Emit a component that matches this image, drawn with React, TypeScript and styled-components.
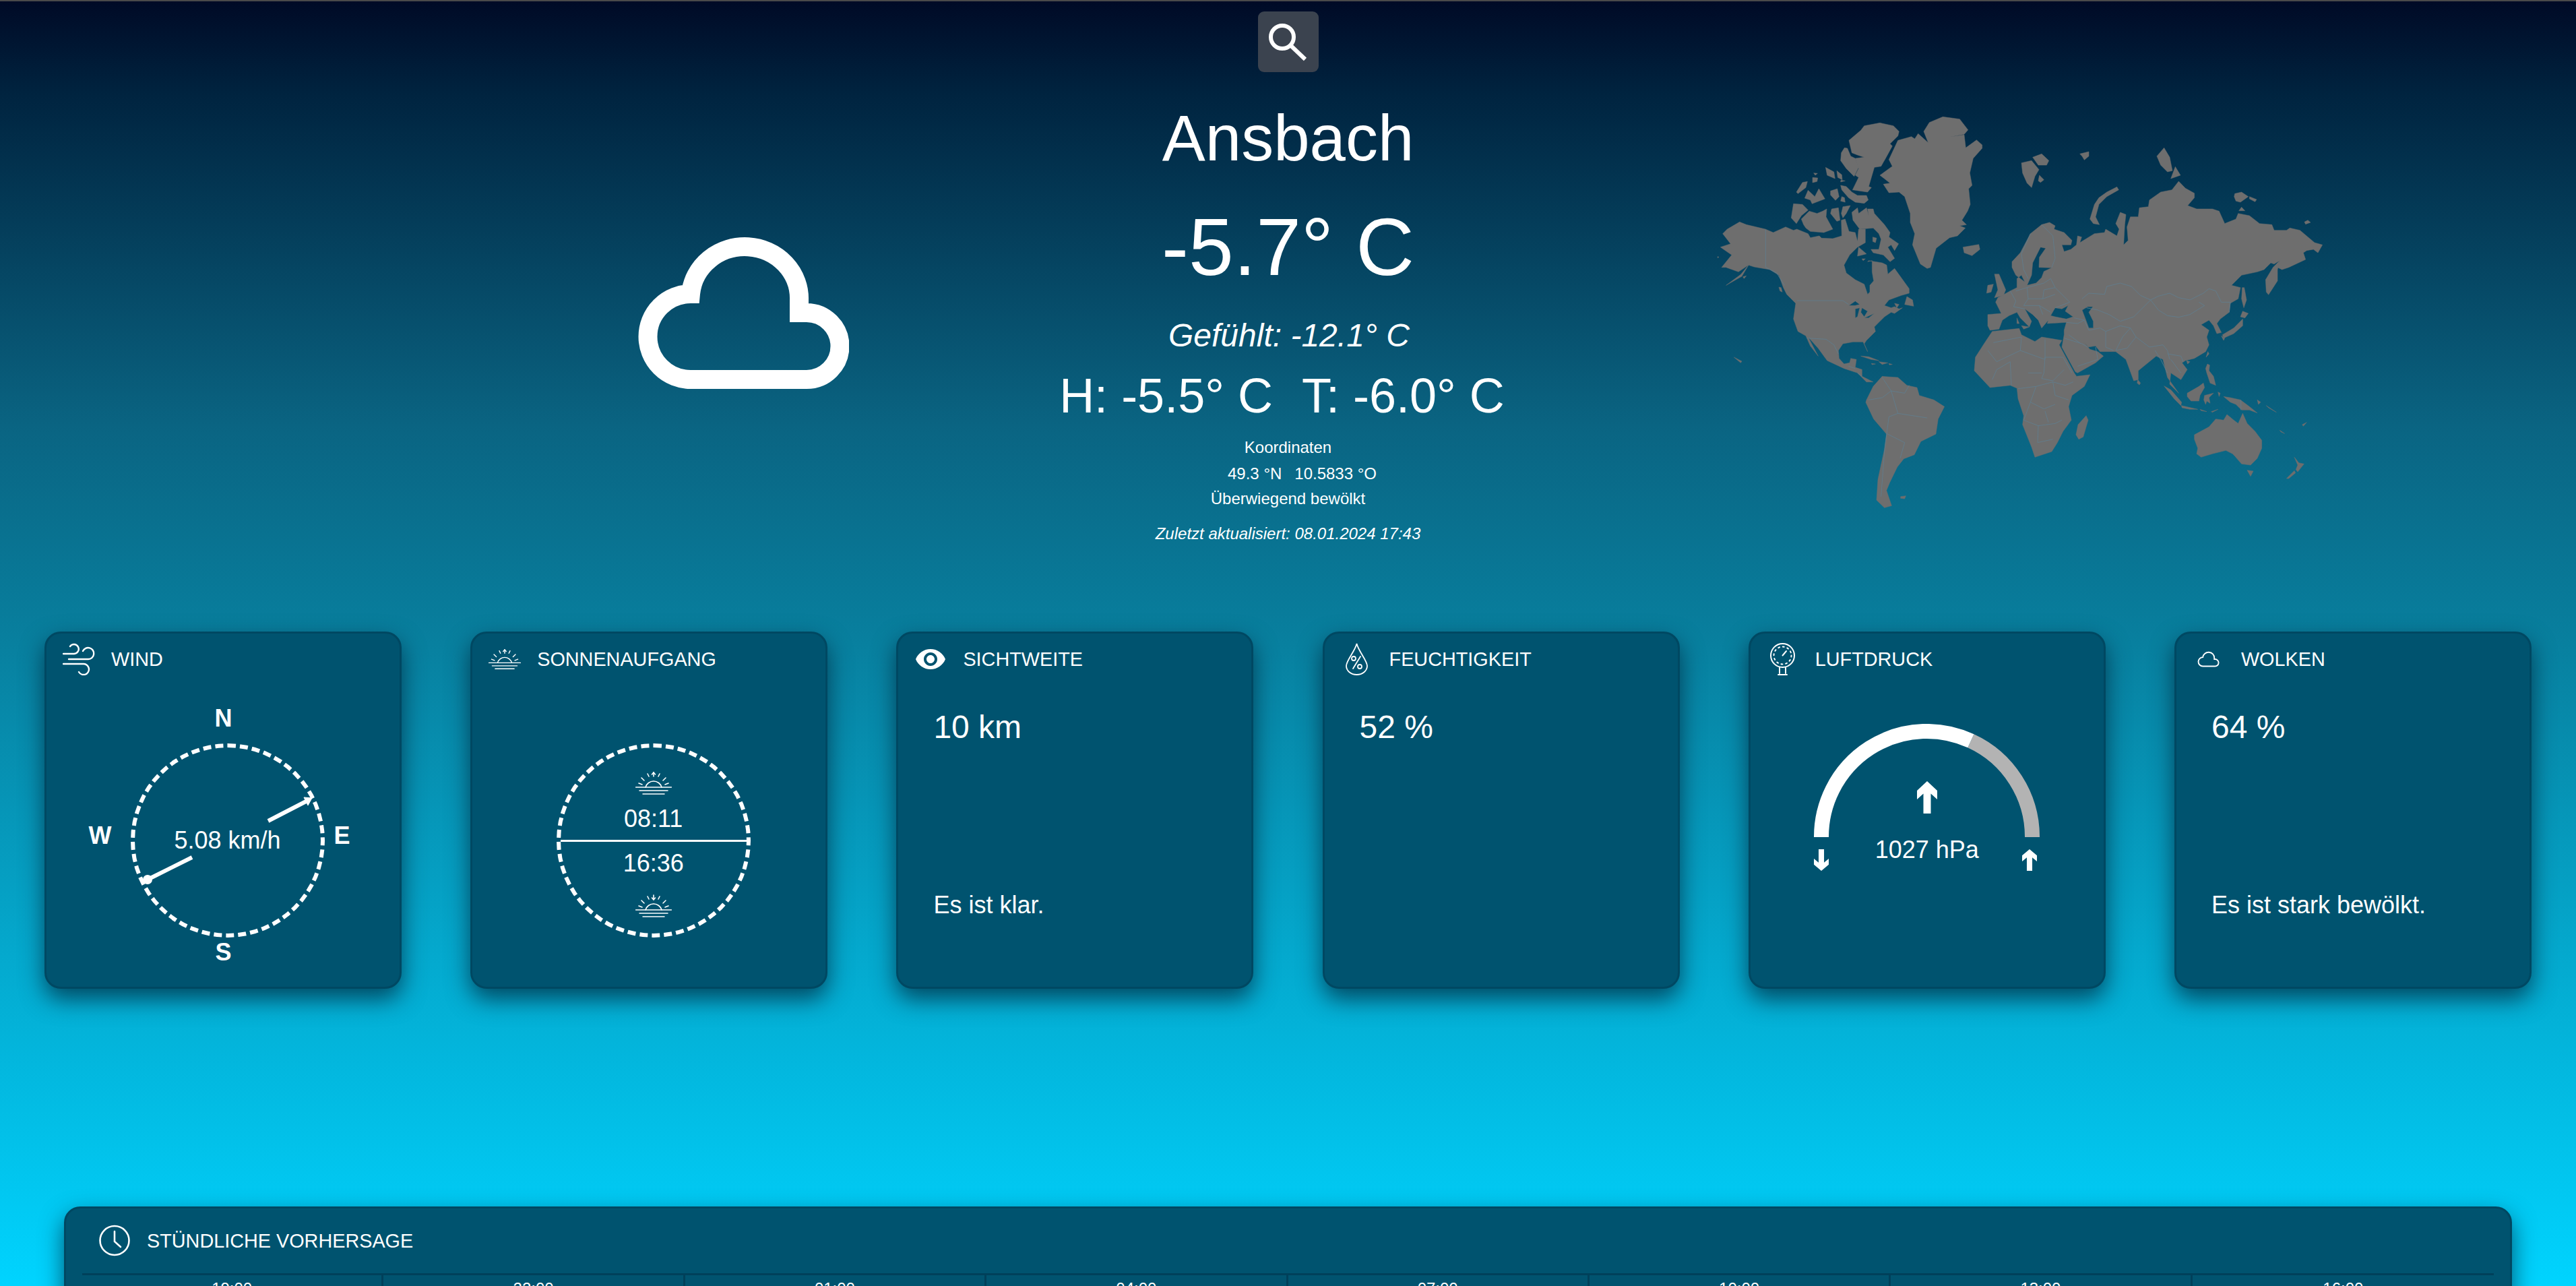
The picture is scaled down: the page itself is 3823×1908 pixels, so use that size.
import React from "react";
import styled, { createGlobalStyle } from "styled-components";
import { MdVisibility } from "react-icons/md";

//////////////////////////////////////////////////////////////////////////////

const GlobalStyle = createGlobalStyle`
  html, body {
    margin: 0;
    padding: 0;
    overflow: hidden;
    font-family: "Liberation Sans", Arial, sans-serif;
    color: #fff;
  }
`;

const SPage = styled.div`
  box-sizing: border-box;
  height: 1908px;
  overflow: hidden;
  border-top: 2px solid #4a4a4a;
  background: linear-gradient(#000a26 0, #00233f 7%, #0a6482 33%, #08809f 50%, #00d4ff 100%);
`;

const SSearchRow = styled.div`
  display: flex;
  justify-content: center;
  padding-top: 15px;
`;

const SSearchButton = styled.button`
  width: 90px;
  height: 90px;
  padding: 0;
  display: flex;
  align-items: center;
  justify-content: center;
  border: none;
  border-radius: 9px;
  background: #3b434f;
`;

const SHero = styled.section`
  display: grid;
  grid-template-columns: 1fr 800px 1fr;
`;

const SHeroLeft = styled.div`
  display: flex;
  justify-content: flex-end;
  align-items: center;
  padding: 14px 252px 0 0;
`;

const SHeroRight = styled.div`
  display: flex;
  align-items: center;
  padding: 27px 0 0 228.5px;
`;

const SHeroCenter = styled.div`
  text-align: center;
`;

const SCity = styled.h1`
  margin: 43px 0 0;
  font-size: 96px;
  line-height: 110px;
  font-weight: 400;
`;

const STemp = styled.div`
  margin-top: 36px;
  font-size: 120px;
  line-height: 140px;
`;

const SFeels = styled.div`
  margin-top: 34px;
  padding-left: 3px;
  font-size: 48px;
  line-height: 56px;
  font-style: italic;
`;

const SHighLow = styled.div`
  margin-top: 20px;
  padding-right: 18px;
  display: flex;
  justify-content: center;
  gap: 43px;
  font-size: 72px;
  line-height: 82px;
`;

const SSmallLine = styled.div<{ $gap: number; $italic?: boolean }>`
  margin-top: ${(props) => props.$gap}px;
  font-size: 24px;
  line-height: 28px;
  font-style: ${(props) => (props.$italic ? "italic" : "normal")};
`;

const SCoords = styled.div`
  margin-top: 11px;
  padding-left: 42px;
  display: flex;
  justify-content: center;
  gap: 19px;
  font-size: 24px;
  line-height: 28px;
`;

const SCardRow = styled.section`
  display: flex;
  justify-content: space-between;
  margin-top: 131px;
  padding: 0 66px;
`;

const SCard = styled.article`
  box-sizing: border-box;
  width: 530px;
  height: 530px;
  display: flex;
  flex-direction: column;
  border: 3px solid #004862;
  border-radius: 24px;
  background: #00536f;
  box-shadow: 0 15px 35px rgba(0, 30, 50, 0.7);
`;

const SCardHead = styled.header`
  display: flex;
  align-items: center;
  gap: 24px;
  height: 48px;
  padding: 14px 0 0 24px;
`;

const SIconSlot = styled.span`
  width: 48px;
  height: 48px;
  flex: none;
  display: flex;
  align-items: center;
  justify-content: center;
`;

const STitle = styled.h2`
  margin: 0;
  font-size: 28.8px;
  line-height: 34px;
  font-weight: 400;
`;

const SValue = styled.div`
  margin: 49px 0 0 52px;
  font-size: 48px;
  line-height: 56px;
`;

const SNote = styled.p`
  margin: 215px 0 0 52px;
  font-size: 36px;
  line-height: 42px;
`;

const SDialGrid = styled.div`
  display: grid;
  grid-template-columns: 124.5px 288px 111.5px;
  grid-template-rows: 42px 288px 42px;
  row-gap: 16.5px;
  margin-top: 42.5px;
  font-size: 36px;
  line-height: 42px;
  font-weight: 700;
`;

const SNorth = styled.span`
  grid-column: 2;
  grid-row: 1;
  text-align: center;
  padding-right: 12px;
`;

const SSouth = styled.span`
  grid-column: 2;
  grid-row: 3;
  margin-top: -16px;
  text-align: center;
  padding-right: 12px;
`;

const SWest = styled.span`
  grid-column: 1;
  grid-row: 2;
  align-self: center;
  justify-self: end;
  padding: 0 28px 14px 0;
`;

const SEast = styled.span`
  grid-column: 3;
  grid-row: 2;
  align-self: center;
  padding: 0 0 14px 14px;
`;

const SCircle = styled.div`
  position: relative;
  box-sizing: border-box;
  width: 288px;
  height: 288px;
  border: 6px dashed #fff;
  border-radius: 50%;
`;

const SWindCircle = styled(SCircle)`
  grid-column: 2;
  grid-row: 2;
  display: flex;
  align-items: center;
  justify-content: center;
  font-weight: 400;
`;

const SNeedle = styled.svg`
  position: absolute;
  top: -6px;
  left: -6px;
  width: 288px;
  height: 288px;
`;

const SSunCircle = styled(SCircle)`
  margin: 101px 0 0 124.5px;
  display: flex;
  flex-direction: column;
  align-items: center;
  padding-top: 36px;
`;

const STime = styled.div<{ $top: number; $bottom: number }>`
  margin: ${(props) => props.$top}px 0 ${(props) => props.$bottom}px;
  font-size: 36px;
  line-height: 42px;
`;

const SSunLine = styled.div`
  width: 100%;
  height: 3px;
  flex: none;
  background: #fff;
`;

const SGauge = styled.div`
  position: relative;
  width: 335px;
  margin: 71.5px auto 0;
`;

const SGaugeArc = styled.svg`
  display: block;
  width: 335px;
  height: 168px;
`;

const SGaugeMid = styled.svg`
  position: absolute;
  top: 85.5px;
  left: 152.5px;
  width: 30px;
  height: 48px;
`;

const SGaugeFoot = styled.div`
  display: grid;
  grid-template-columns: 26px 1fr 26px;
  margin-top: -2px;
  font-size: 36px;
  line-height: 42px;
  text-align: center;
`;

const SSmallArrow = styled.svg<{ $down?: boolean }>`
  width: 22px;
  height: 32px;
  margin-top: 20px;
  transform: ${(props) => (props.$down ? "rotate(180deg)" : "none")};
`;

const SPanel = styled.section`
  box-sizing: border-box;
  height: 400px;
  margin: 323px 95px 0;
  padding: 0 24px;
  border: 3px solid #004862;
  border-radius: 24px;
  background: #00536f;
  box-shadow: 0 15px 35px rgba(0, 30, 50, 0.7);
`;

const SPanelHead = styled.header`
  display: flex;
  align-items: center;
  gap: 25px;
  height: 47px;
  padding: 24px 0 25px 25px;
`;

const SHourRow = styled.div`
  display: grid;
  grid-template-columns: repeat(8, 1fr);
  border-top: 3px solid #00405a;
`;

const SHourCell = styled.div`
  height: 200px;
  padding-top: 6px;
  border-right: 3px solid #00405a;
  font-size: 24px;
  line-height: 28px;
  text-align: center;

  &:last-child {
    border-right: none;
  }
`;

const SMap = styled.svg`
  display: block;
  width: 920px;
  height: 600px;
`;

////////////////////////////////////////////////////////////////////////////

const HOURS = ["19:00", "22:00", "01:00", "04:00", "07:00", "10:00", "13:00", "16:00"];

const ARROW = "15,0 30,14 30,27 20.5,18.5 20.5,48 9.5,48 9.5,18.5 0,27 0,14";

const CLOUD = "M78 213 A63.5 63.5 0 0 1 78 86 A80.7 77 0 0 1 239 96 V114 H250 A49.5 49.5 0 0 1 250 213 Z";

// the world map is traced from two crops of the design, so the americas and
// the rest of the world each keep the coordinates of their own crop
const WEST_LAND = [
  // greenland
  "M1030 10L1105 20L1142 68L1125 88L1060 100L1125 90L1132 148L1180 113L1205 135L1205 150L1165 195L1150 260L1160 315L1145 330L1152 400L1140 430L1115 470L1135 490L1105 495L1130 505L1095 540L1060 548L1000 595L975 680L960 685L930 665L895 580L905 530L885 480L885 440L860 365L835 345L790 348L765 310L795 305L750 270L805 230L790 200L830 115L890 98L905 108L920 85L965 125L945 75L970 35Z",
  // arctic islands
  "M612 115L665 70L680 50L750 37L810 50L835 75L830 95L795 130L805 140L775 195L755 230L725 235L700 320L712 325L695 345L628 335L655 280L640 270L655 240L640 195L680 190L650 180L625 170Z",
  "M592 148L605 150L620 185L640 195L655 235L635 275L600 240L575 205L578 170Z",
  "M508 235L545 255L550 285L515 270ZM558 250L580 268L582 290L562 280ZM576 292L595 295L575 300ZM455 260L472 262L462 270ZM450 280L473 282L470 298L450 303ZM405 302L427 298L420 325L385 352L378 345Z",
  "M430 337L460 365L478 330L490 350L505 375L448 397L440 380L415 372ZM530 340L560 330L568 365L552 382L530 358ZM575 315L600 320L625 345L650 360L690 360L698 380L680 395L640 390L610 370L580 335ZM580 365L592 370L595 390L575 385Z",
  "M365 397L405 400L430 425L400 450L378 485L355 460ZM435 430L470 440L495 430L513 420L510 455L540 510L500 525L440 520L420 505L410 490L400 465ZM535 420L565 415L572 470L558 475L530 440ZM585 410L618 405L600 440L585 460L578 440Z",
  "M625 435L650 415L655 440L690 415L700 450L695 420L720 420L725 440L770 490L795 525L790 545L833 575L815 605L800 580L785 590L815 640L795 655L765 625L720 615L710 600L745 600L755 555L745 530L720 505L660 510L630 470ZM718 545L735 550L730 570L718 565ZM655 590L690 620L650 630ZM670 642L685 642L675 650Z",
  // north and central america with the great lakes cut out
  "M240 510L275 525L330 500L365 515L380 510L430 530L440 548L480 540L490 550L540 552L580 540L578 470L595 465L612 520L640 525L650 565L655 510L685 510L685 570L650 590L640 600L615 625L590 670L600 705L640 735L680 755L695 800L705 790L705 760L722 740L715 700L715 650L695 655L700 650L760 660L780 670L785 710L815 685L880 775L880 795L845 805L790 825L770 850L800 860L815 855L835 865L850 860L815 885L800 880L770 900L745 925L725 945L730 965L690 1005L680 1020L695 1055L675 1012L630 1012L585 1020L565 1050L568 1085L590 1110L615 1105L620 1085L645 1090L640 1125L670 1135L670 1165L720 1190L690 1190L650 1150L590 1130L515 1095L475 1040L430 990L475 1075L440 1030L420 985L385 965L365 910L375 840L350 815L335 800L320 770L300 715L260 690L190 678L165 670L135 720L65 760L130 712L165 670L120 700L65 680L45 680L90 625L40 590L85 575L50 530L70 510L125 478L155 490ZM612 850L640 830L660 845L640 850ZM640 865L660 860L650 900L640 905ZM670 860L695 875L680 900L665 880ZM680 905L725 885L700 905ZM815 840L835 845L825 860Z",
  "M870 810L895 825L900 853L860 845Z",
  "M665 1075L700 1078L745 1095L710 1090ZM745 1100L785 1105L760 1112ZM790 1108L805 1112L792 1114ZM712 1108L730 1110L715 1113ZM300 768L310 770L315 790L305 785ZM140 722L155 718L145 730ZM100 1080L135 1098L130 1105ZM27 632L33 634L28 638Z",
  // south america
  "M690 1270L720 1210L760 1165L830 1170L870 1205L915 1215L925 1250L990 1270L1037 1300L1009 1355L999 1422L932 1455L903 1514L856 1532L827 1569L794 1637L779 1673L802 1741L770 1750L735 1716L741 1624L770 1490L779 1422L722 1355L687 1281Z",
  "M842 1700L865 1697L860 1710L842 1708Z",
  // iceland
  "M1120 590L1190 578L1195 600L1160 628L1125 615Z",
];

const EAST_LAND = [
  // africa
  "M20 875L140 862L150 890L210 920L240 900L330 915L318 935L385 1060L395 1075L455 1068L430 1120L375 1160L360 1210L372 1270L335 1320L310 1370L285 1410L210 1435L195 1390L155 1290L160 1250L135 1175L130 1128L100 1115L10 1125L-60 1050L-55 990L-10 920Z",
  "M438 1250L447 1270L425 1345L405 1355L393 1335L402 1290Z",
  // eurasia with the baltic, black sea and caspian cut out
  "M0 800L60 795L35 745L45 725L100 695L130 680L130 640L150 625L165 655L125 625L108 590L108 565L145 525L190 440L240 400L275 390L300 405L295 420L340 435L375 470L370 490L330 490L340 520L370 510L395 490L400 450L418 455L410 480L475 440L520 435L525 420L575 450L585 420L570 395L590 345L615 355L610 400L605 490L625 470L620 410L635 365L670 365L675 325L715 320L720 290L770 255L820 245L850 207L880 238L920 260L920 280L890 315L930 330L1000 330L1030 340L1055 395L1105 375L1115 350L1165 360L1210 395L1265 400L1275 425L1330 425L1345 415L1390 425L1455 480L1490 490L1470 525L1450 510L1420 515L1405 525L1415 555L1340 590L1310 600L1290 590L1300 560L1275 575L1260 570L1230 600L1200 610L1130 625L1085 670L1125 680L1115 730L1080 750L1075 790L1035 820L1020 840L1040 880L1020 885L1005 850L985 825L950 845L985 870L975 900L985 935L970 965L920 995L880 1005L865 1015L888 1045L860 1090L815 1060L810 1110L850 1150L800 1080L780 1000L750 985L670 1050L670 1090L650 1095L615 1000L570 965L500 965L480 940L445 945L430 925L455 955L490 965L515 985L480 1015L400 1060L390 1055L330 945L340 890L340 870L350 835L265 840L270 825L240 860L225 825L200 800L165 775L195 830L185 855L145 815L130 790L95 805L65 825L50 865L10 870L0 850ZM175 670L195 625L200 570L235 500L258 505L230 545L228 590L285 592L250 608L240 635L215 660ZM280 805L300 770L330 775L358 760L345 785L380 810L350 820L300 810ZM420 780L445 765L468 765L450 790L470 830L470 860L450 860L435 820Z",
  // europe islands
  "M30 620L50 620L80 690L70 715L30 725L45 690ZM0 670L25 665L15 700L-5 705ZM130 815L140 840L130 840ZM150 850L185 855L160 865Z",
  "M150 125L195 115L228 155L210 185L195 235L175 215L155 170ZM200 100L240 85L272 115L262 135L225 135ZM230 180L250 200L235 212L225 205ZM410 85L450 75L450 95L430 112L420 95Z",
  "M575 232L583 245L530 275L495 310L480 365L497 400L470 395L455 375L475 310L495 280L530 255Z",
  "M785 58L810 100L822 160L800 165L770 135L753 95ZM835 142L858 180L815 195ZM1100 262L1130 255L1160 275L1125 300L1105 295L1097 275ZM1165 275L1197 288L1190 298L1165 285ZM1130 322L1145 338L1118 338ZM1410 388L1425 380L1437 390L1415 398Z",
  // kamchatka, sakhalin, japan
  "M1300 560L1290 600L1290 650L1250 712L1240 700L1237 645L1270 590Z",
  "M1133 680L1142 680L1152 735L1140 770L1130 730Z",
  "M1135 785L1160 795L1145 815L1125 810ZM1135 820L1135 850L1095 885L1050 905L1045 890L1095 860L1115 840ZM1040 895L1055 905L1050 915Z",
  // south east asia
  "M980 965L985 975L972 990ZM885 1005L900 1010L890 1020ZM668 1090L680 1105L675 1113L665 1105Z",
  "M978 1020L988 1025L985 1050L1005 1075L1015 1115L990 1105L975 1060L970 1040Z",
  "M785 1118L815 1135L863 1190L860 1205L830 1175ZM862 1205L935 1222L900 1222L865 1215ZM945 1222L975 1232L950 1228ZM995 1232L1025 1222L1000 1235Z",
  "M888 1150L940 1120L960 1105L965 1125L945 1160L940 1185L905 1185L888 1165ZM965 1160L1005 1150L985 1170L990 1195L975 1185L970 1200L962 1180ZM1025 1145L1035 1150L1030 1165Z",
  "M1050 1165L1080 1170L1125 1180L1165 1210L1200 1238L1165 1225L1130 1225L1105 1200L1080 1190Z",
  "M1200 1180L1215 1190L1205 1200ZM1240 1205L1285 1235L1250 1215ZM1300 1315L1322 1330L1305 1322ZM1400 1290L1420 1280L1405 1297Z",
  // australia and new zealand
  "M920 1335L985 1300L1015 1265L1050 1270L1065 1245L1095 1270L1115 1285L1135 1240L1155 1285L1190 1320L1220 1360L1220 1395L1200 1440L1170 1470L1130 1465L1100 1430L1090 1420L1060 1405L1000 1420L950 1435L930 1420L935 1395L920 1355Z",
  "M1155 1493L1182 1497L1170 1520Z",
  "M1365 1435L1385 1460L1408 1465L1380 1500L1372 1490L1380 1470ZM1365 1495L1370 1505L1340 1530L1330 1530Z",
];

const WEST_BORDERS = [
  "M241 512V680L290 705L325 760",
  "M380 828H585L610 845",
  "M425 995L510 1000L545 1025L565 1065",
  "M610 1120L640 1130M650 1150L670 1165",
  "M760 1170L800 1230L760 1260L700 1270M800 1230L860 1240L880 1205",
  "M800 1230L830 1330L960 1350M830 1330L790 1345L780 1420L770 1500L755 1700M780 1420L860 1460L840 1530",
];

const EAST_BORDERS = [
  "M725 735L760 718L810 705L850 725L900 735L960 705L985 685L1015 695L1040 745L1080 745L1075 790",
  "M725 735L760 780L800 805L850 812L900 800L965 760L940 745",
  "M420 730L450 705L520 710L530 675L590 660L640 675L680 715L725 735L680 780L650 810",
  "M440 770L490 780L540 800L590 830L650 810",
  "M430 825L450 870L500 860L525 875L525 945L560 960M525 875L590 850L635 860L600 900L570 960",
  "M635 860L660 900L620 950L570 960M660 900L720 945L780 935L800 960L810 1000",
  "M745 960L770 1000L800 1060M800 975L860 985L870 1010M815 1000L860 1060",
  "M100 695L125 740L115 765L165 775M125 695L175 680L250 660L280 640L300 680L330 710L365 745L300 770",
  "M175 680L180 730L245 730L300 710M180 730L160 760L230 760L280 790M230 760L245 800M300 680L250 690L245 730",
  "M190 440L150 530L160 600L180 640M240 400L290 450L300 550L285 590",
  "M350 835L400 840L430 825L385 815M340 905L420 930L445 945M400 1030L490 1000L480 945M360 890L415 930",
  "M25 925L150 900L145 960L255 1000L255 910M255 990L335 990L375 1060M255 990L250 1060L240 1085L290 1095L340 1045",
  "M0 960L40 1010L145 960M100 1010L105 1115M100 1010L40 1045L20 1090M180 1060L240 1060",
  "M135 1130L215 1120L290 1100L345 1115L380 1100M290 1100L300 1160L360 1180M215 1120L190 1190L250 1220L300 1200",
  "M190 1190L160 1270L225 1295L300 1285L330 1270M225 1295L222 1370L290 1355M255 1230L270 1280",
  "M1127 1180V1225",
];

const Cloud = ({ width, height, stroke }: { width: number; height: number; stroke: number }) => (
  <svg width={width} height={height} viewBox="0 0 313 227" fill="none" stroke="#fff" strokeWidth={stroke}>
    <path d={CLOUD} />
  </svg>
);

const WindIcon = () => (
  <svg width="48" height="48" viewBox="0 0 48 48" fill="none" stroke="#fff" strokeWidth="2.4" strokeLinecap="round">
    <path d="M1 16 H17 A7 7 0 1 0 11 5" />
    <path d="M9 24 H38 A8.5 8.5 0 1 0 30 12" />
    <path d="M1 31 H31 A8 8 0 1 1 24 43" />
  </svg>
);

const SunIcon = ({ width, height, down }: { width: number; height: number; down?: boolean }) => (
  <svg width={width} height={height} viewBox="0 0 54 35" fill="none" stroke="#fff" strokeWidth="1.6" strokeLinecap="round">
    <path d="M0.5 23 H53.5 M6 28 H48 M11 33 H43" strokeWidth="1.5" />
    <path d="M15 23 A12.5 12.5 0 0 1 39 23" />
    <path d="M27 1 V7 M10 19 L5 17 M44 19 L49 17 M13 13 L9 9 M41 13 L45 9 M20 7 L18 3 M34 7 L36 3" />
    <path d={down ? "M24.5 5 L27 8 L29.5 5" : "M24.5 4 L27 1 L29.5 4"} />
  </svg>
);

const DropIcon = () => (
  <svg width="37" height="48" viewBox="0 0 37 48" fill="none" stroke="#fff" strokeWidth="1.8" strokeLinecap="round">
    <path d="M18.5 1 C16 12 3 26 3 34 A15.5 13 0 0 0 34 34 C34 26 21 12 18.5 1 Z" />
    <path d="M24 20 L13 38" />
    <circle cx="14" cy="23" r="3" />
    <circle cx="23" cy="35" r="3" />
  </svg>
);

const PressureIcon = () => (
  <svg width="39" height="48" viewBox="0 0 39 48" fill="none" stroke="#fff" strokeWidth="2" strokeLinecap="round">
    <circle cx="19.5" cy="18.5" r="17.5" />
    <circle cx="19.5" cy="18.5" r="13" strokeDasharray="2 4.8" />
    <path d="M19.5 18.5 L25 12" />
    <path d="M15 36 V45 M24 36 V45 M13 47 H26" />
  </svg>
);

const ClockIcon = () => (
  <svg width="46" height="47" viewBox="0 0 46 47" fill="none" stroke="#fff" strokeWidth="2.6" strokeLinecap="round">
    <circle cx="23" cy="23.5" r="21.5" />
    <path d="M23 10 V25 L32 33" />
  </svg>
);

const MapLayer = ({ land, borders, shift }: { land: string[]; borders: string[]; shift?: string }) => (
  <g transform={shift}>
    <g fill="#6e6e6e" fillRule="evenodd" stroke="#6e6e6e" strokeWidth="1.5" strokeLinejoin="round">
      {land.map((d) => (
        <path key={d} d={d} />
      ))}
    </g>
    <g fill="none" stroke="#5f7f90" strokeWidth="2.4">
      {borders.map((d) => (
        <path key={d} d={d} />
      ))}
    </g>
  </g>
);

const WorldMap = () => (
  <SMap viewBox="0 0 2760 1800">
    <MapLayer land={WEST_LAND} borders={WEST_BORDERS} />
    <MapLayer land={EAST_LAND} borders={EAST_BORDERS} shift="translate(1230 90)" />
  </SMap>
);

const CardHead = ({ icon, title }: { icon: React.ReactNode; title: string }) => (
  <SCardHead>
    <SIconSlot>{icon}</SIconSlot>
    <STitle>{title}</STitle>
  </SCardHead>
);

const App = () => {
  return (
    <SPage>
      <GlobalStyle />

      <SSearchRow>
        <SSearchButton aria-label="Suche">
          <svg width="60" height="60" viewBox="0 0 60 60" fill="none" stroke="#fff" strokeWidth="6">
            <circle cx="21" cy="23" r="17" />
            <path d="M33 35 L55 56" />
          </svg>
        </SSearchButton>
      </SSearchRow>

      <SHero>
        <SHeroLeft>
          <Cloud width={313} height={227} stroke={28} />
        </SHeroLeft>
        <SHeroCenter>
          <SCity>Ansbach</SCity>
          <STemp>-5.7° C</STemp>
          <SFeels>Gefühlt: -12.1° C</SFeels>
          <SHighLow>
            <span>H: -5.5° C</span>
            <span>T: -6.0° C</span>
          </SHighLow>
          <SSmallLine $gap={22}>Koordinaten</SSmallLine>
          <SCoords>
            <span>49.3 °N</span>
            <span>10.5833 °O</span>
          </SCoords>
          <SSmallLine $gap={9}>Überwiegend bewölkt</SSmallLine>
          <SSmallLine $gap={24} $italic>
            Zuletzt aktualisiert: 08.01.2024 17:43
          </SSmallLine>
        </SHeroCenter>
        <SHeroRight>
          <WorldMap />
        </SHeroRight>
      </SHero>

      <SCardRow>
        <SCard>
          <CardHead icon={<WindIcon />} title="WIND" />
          <SDialGrid>
            <SNorth>N</SNorth>
            <SWest>W</SWest>
            <SWindCircle>
              5.08 km/h
              <SNeedle viewBox="0 0 288 288" fill="none" stroke="#fff" strokeWidth="6">
                <path d="M204 115 L264 84" />
                <path d="M257 80 L269 81 L263 92 Z" fill="#fff" strokeWidth="1" />
                <path d="M91 169 L25 202" />
                <circle cx="25" cy="202" r="7" fill="#fff" stroke="none" />
              </SNeedle>
            </SWindCircle>
            <SEast>E</SEast>
            <SSouth>S</SSouth>
          </SDialGrid>
        </SCard>

        <SCard>
          <CardHead icon={<SunIcon width={48} height={31} />} title="SONNENAUFGANG" />
          <SSunCircle>
            <SunIcon width={54} height={35} />
            <STime $top={13.5} $bottom={10}>
              08:11
            </STime>
            <SSunLine />
            <STime $top={11} $bottom={25}>
              16:36
            </STime>
            <SunIcon width={54} height={35} down />
          </SSunCircle>
        </SCard>

        <SCard>
          <CardHead icon={<MdVisibility size={48} color="#fff" />} title="SICHTWEITE" />
          <SValue>10 km</SValue>
          <SNote>Es ist klar.</SNote>
        </SCard>

        <SCard>
          <CardHead icon={<DropIcon />} title="FEUCHTIGKEIT" />
          <SValue>52 %</SValue>
        </SCard>

        <SCard>
          <CardHead icon={<PressureIcon />} title="LUFTDRUCK" />
          <SGauge>
            <SGaugeArc viewBox="0 0 335 168" fill="none" strokeWidth="22">
              <path d="M232.9 25.3 A156.5 156.5 0 0 1 324 168" stroke="#b3b3b3" />
              <path d="M11 168 A156.5 156.5 0 0 1 232.9 25.3" stroke="#fff" />
            </SGaugeArc>
            <SGaugeMid viewBox="0 0 30 48">
              <polygon points={ARROW} fill="#fff" />
            </SGaugeMid>
            <SGaugeFoot>
              <SSmallArrow viewBox="0 0 30 48" preserveAspectRatio="none" $down>
                <polygon points={ARROW} fill="#fff" />
              </SSmallArrow>
              <span>1027 hPa</span>
              <SSmallArrow viewBox="0 0 30 48" preserveAspectRatio="none">
                <polygon points={ARROW} fill="#fff" />
              </SSmallArrow>
            </SGaugeFoot>
          </SGauge>
        </SCard>

        <SCard>
          <CardHead icon={<Cloud width={33} height={24} stroke={18} />} title="WOLKEN" />
          <SValue>64 %</SValue>
          <SNote>Es ist stark bewölkt.</SNote>
        </SCard>
      </SCardRow>

      <SPanel>
        <SPanelHead>
          <ClockIcon />
          <STitle>STÜNDLICHE VORHERSAGE</STitle>
        </SPanelHead>
        <SHourRow>
          {HOURS.map((hour) => (
            <SHourCell key={hour}>{hour}</SHourCell>
          ))}
        </SHourRow>
      </SPanel>
    </SPage>
  );
};

export default App;
